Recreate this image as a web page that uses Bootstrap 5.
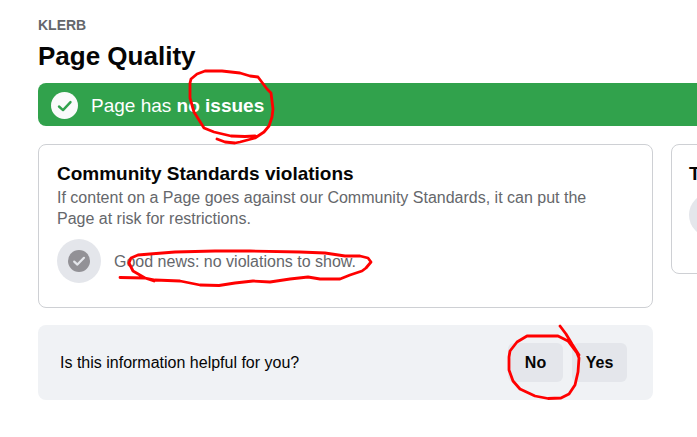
<!DOCTYPE html>
<html lang="en">
<head>
<meta charset="utf-8">
<meta name="viewport" content="width=device-width, initial-scale=1">
<title>Page Quality</title>
<link href="https://cdn.jsdelivr.net/npm/bootstrap@5.3.0/dist/css/bootstrap.min.css" rel="stylesheet">
<style>
  body { font-family: "Liberation Sans", Arial, sans-serif; font-size: 16px; line-height: 21px; color: #050505; background: #fff; }
  .quality-page { padding: 16px 0 32px 38px; }
  .page-name { font-size: 14px; line-height: 18px; color: #65676b; }
  .page-title { font-size: 26px; line-height: 31px; margin: 7px 0 11px; }
  .status-banner { background: #31a24c; color: #fff; border-radius: 8px 0 0 8px; min-height: 43px; padding: 1px 13px 0; gap: 13px; font-size: 19px; }
  .columns { gap: 18px; margin-top: 18px; }
  .side-column { width: 26px; }
  .panel { --bs-border-color: #ced0d4; border-radius: 8px; padding: 18px; }
  .side-panel { width: 320px; min-height: 130px; padding-left: 17px; }
  .panel-title { font-size: 19px; line-height: 22px; }
  .panel-text { margin: 2px 0 0; padding-right: 36px; }
  .muted-text { color: #65676b; }
  .result-row { gap: 13px; margin: 10px 0 6px; }
  .icon-disc { width: 44px; height: 44px; background: #e4e6eb; }
  .feedback { background: #f0f2f5; border-radius: 8px; margin-top: 17px; padding: 18px 26px 18px 22px; }
  .feedback-buttons { gap: 9px; }
  .answer { --bs-btn-bg: #e4e6eb; --bs-btn-color: #050505; --bs-btn-hover-bg: #d8dadf; --bs-btn-border-color: transparent; --bs-btn-border-radius: 6px; --bs-btn-padding-x: 12px; --bs-btn-padding-y: 8px; --bs-btn-font-size: 16px; --bs-btn-line-height: 21px; min-width: 55px; }
  .ink { pointer-events: none; }
</style>
<script src="https://cdn.jsdelivr.net/npm/bootstrap@5.3.0/dist/js/bootstrap.bundle.min.js"></script>
</head>
<body>
<main class="quality-page position-relative overflow-hidden">
  <div class="page-name fw-bold">KLERB</div>
  <h1 class="page-title fw-bold">Page Quality</h1>
  <div class="status-banner d-flex align-items-center" role="status">
    <svg class="flex-shrink-0" width="27" height="27" viewBox="0 0 27 27" aria-hidden="true">
      <circle cx="13.5" cy="13.5" r="13.5" fill="#fafafa"/>
      <path d="M8 14.5l4 3.6 7.5-8" fill="none" stroke="#31a24c" stroke-width="2.4" stroke-linecap="round" stroke-linejoin="round"/>
    </svg>
    <div>Page has <strong>no issues</strong></div>
  </div>
  <div class="columns d-flex align-items-start">
    <div class="flex-grow-1">
      <section class="panel border">
        <h2 class="panel-title fw-bold mb-0">Community Standards violations</h2>
        <p class="panel-text muted-text">If content on a Page goes against our Community Standards, it can put the Page at risk for restrictions.</p>
        <div class="result-row d-flex align-items-center">
          <div class="icon-disc rounded-circle d-flex align-items-center justify-content-center flex-shrink-0">
            <svg width="22" height="22" viewBox="0 0 22 22" aria-hidden="true">
              <circle cx="11" cy="11" r="11" fill="#929196"/>
              <path d="M6.2 11.6l3.2 3 6.6-6.8" fill="none" stroke="#e4e6eb" stroke-width="2.2" stroke-linecap="round" stroke-linejoin="round"/>
            </svg>
          </div>
          <div class="muted-text">Good news: no violations to show.</div>
        </div>
      </section>
      <section class="feedback d-flex align-items-center justify-content-between">
        <div>Is this information helpful for you?</div>
        <div class="feedback-buttons d-flex">
          <button type="button" class="btn answer fw-bold">No</button>
          <button type="button" class="btn answer fw-bold">Yes</button>
        </div>
      </section>
    </div>
    <div class="side-column flex-shrink-0">
      <section class="side-panel panel border">
        <h2 class="panel-title fw-bold mb-2">T</h2>
        <div class="icon-disc rounded-circle"></div>
      </section>
    </div>
  </div>
  <!-- Hand-drawn red markings over the page -->
  <svg class="ink position-absolute top-0 start-0" width="697" height="437" viewBox="0 0 697 437" fill="none" stroke="#f00" stroke-width="2.8" stroke-linejoin="round" stroke-linecap="round" aria-hidden="true">
    <path d="M255 136L245 136.500L231 136L214 132L204 128L194 112L190 98L190 83L191 79L197 74L205 71L222 71L240 73L250 76L258 77L264 85L267 89L271 93L273 109L272 117L269 126L264 132L255 138L240 142L235 143L225 142L217 139"/>
    <path d="M120 277.5L145 278L154 281M145 278L133 271L129 263L131 258L138 255L150 254L175 252L215 251L250 251L300 252L325 253L345 256L360 256L368 258L371 262L366 268L362 271L350 275L340 279L320 279L308 277L290 279L270 282L253 281L235 283L219 285.5L200 285L180 281L155 280L145 278"/>
    <path d="M560 326L566 334L572 344L579 355L577 353L568 341L558 336L527 336L517 342L510 351L509 357L509 370L513 381L520 389L535 396L548 398.5L561 398L569 394L575 385L578 372L579 358L577 353L573 347"/>
  </svg>
</main>
</body>
</html>
